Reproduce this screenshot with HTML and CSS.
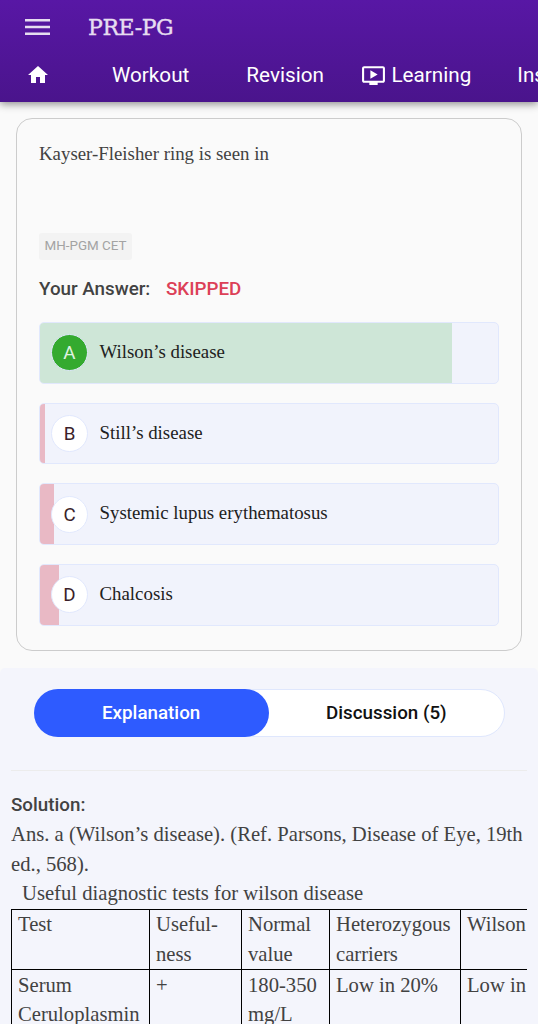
FILE: index.html
```html
<!DOCTYPE html>
<html lang="en">
<head>
  <meta charset="UTF-8">
  <meta name="viewport" content="width=device-width, initial-scale=1.0">
  <title>PRE-PG</title>
  <link rel="stylesheet" href="styles.css">
</head>
<body>
  <header class="header">
    <div class="top-bar">
      <button class="menu-btn" aria-label="Menu">
        <svg width="25" height="17" viewBox="0 0 25 17"><path fill="#e6ddf0" d="M0 0h25v2.4H0zM0 6.8h25v2.4H0zM0 13.600h25V16H0z"/></svg>
      </button>
      <h1 class="brand">PRE-PG</h1>
    </div>
    <nav class="nav">
      <a class="nav-home" href="#" aria-label="Home">
        <svg width="24" height="24" viewBox="0 0 24 24"><path fill="#fff" d="M10 20v-6h4v6h5v-8h3L12 3 2 12h3v8z"/></svg>
      </a>
      <a class="nav-workout" href="#">Workout</a>
      <a class="nav-revision" href="#">Revision</a>
      <a class="nav-learning" href="#">
        <svg width="25" height="25" viewBox="0 0 24 24"><path fill="#fff" d="M21 3H3c-1.1 0-2 .9-2 2v12c0 1.1.9 2 2 2h5v2h8v-2h5c1.1 0 2-.9 2-2V5c0-1.1-.9-2-2-2zm0 14H3V5h18v12zM9 7v8l7-4z"/></svg>
        <span>Learning</span>
      </a>
      <a href="#">Insights</a>
    </nav>
  </header>

  <main class="card">
    <p class="question">Kayser-Fleisher ring is seen in</p>
    <span class="tag">MH-PGM CET</span>
    <p class="answer">Your Answer: <span class="skipped">SKIPPED</span></p>
    <div class="options">
      <div class="option correct">
        <div class="bar" style="width: 90%"></div>
        <span class="letter">A</span>
        <span class="label">Wilson’s disease</span>
      </div>
      <div class="option">
        <div class="bar" style="width: 1%"></div>
        <span class="letter">B</span>
        <span class="label">Still’s disease</span>
      </div>
      <div class="option">
        <div class="bar" style="width: 3%"></div>
        <span class="letter">C</span>
        <span class="label">Systemic lupus erythematosus</span>
      </div>
      <div class="option">
        <div class="bar" style="width: 4.2%"></div>
        <span class="letter">D</span>
        <span class="label">Chalcosis</span>
      </div>
    </div>
  </main>

  <section class="details">
    <div class="tabs">
      <button class="tab active">Explanation</button>
      <button class="tab">Discussion (5)</button>
    </div>
    <div class="solution">
      <h2>Solution:</h2>
      <p>Ans. a (Wilson’s disease). (Ref. Parsons, Disease of Eye, 19th ed., 568).</p>
      <p class="caption">Useful diagnostic tests for wilson disease</p>
      <table>
        <colgroup>
          <col class="col-test">
          <col class="col-use">
          <col class="col-normal">
          <col class="col-carriers">
          <col class="col-wilson">
        </colgroup>
        <tr>
          <td>Test</td>
          <td>Useful-<br>ness</td>
          <td>Normal value</td>
          <td>Heterozygous carriers</td>
          <td>Wilson</td>
        </tr>
        <tr>
          <td>Serum Ceruloplasmin</td>
          <td>+</td>
          <td>180-350 mg/L</td>
          <td>Low in 20%</td>
          <td>Low in</td>
        </tr>
      </table>
    </div>
  </section>
</body>
</html>
```

FILE: styles.css
```css
* {
  box-sizing: border-box;
}

body {
  margin: 0;
  height: 1024px;
  overflow: hidden;
  background-color: #fafafa;
  font-family: Roboto, sans-serif;
  color: #424242;
}

p, h1, h2 {
  margin: 0;
}

button {
  border: none;
  background: none;
  padding: 0;
  font-family: inherit;
  cursor: pointer;
}

.header {
  height: 102px;
  overflow: hidden;
  background: linear-gradient(#5817a5, #4a148c);
  box-shadow: 0 2px 8px rgba(0, 0, 0, 0.45);
}

.top-bar {
  display: flex;
  align-items: center;
  height: 54px;
  padding-left: 25px;
}

.menu-btn {
  width: 25px;
  margin-right: 38px;
}

.menu-btn svg {
  display: block;
}

.brand {
  font-family: "DejaVu Serif", serif;
  font-size: 22px;
  font-weight: 400;
  letter-spacing: -0.4px;
  line-height: 26px;
  padding-top: 1px;
  color: #e6ddf0;
  -webkit-text-stroke: 0.4px #e6ddf0;
}

.nav {
  display: flex;
  align-items: center;
  height: 42px;
  padding-left: 26px;
}

.nav a {
  flex: none;
  color: #fff;
  font-size: 20.7px;
  text-decoration: none;
}

.nav svg {
  display: block;
}

.nav .nav-home {
  margin-right: 62px;
}

.nav .nav-workout {
  margin-right: 57px;
}

.nav .nav-revision {
  margin-right: 37.5px;
}

.nav .nav-learning {
  display: flex;
  align-items: center;
  gap: 5px;
  margin-right: 46px;
}

.nav-learning svg {
  margin-top: 1px;
}

.card {
  height: 533px;
  margin: 16px 16px 0;
  padding: 22px 22px 0;
  border: 1.5px solid #ccc;
  border-radius: 16px;
}

.question {
  height: 92px;
  font-family: "Liberation Serif", serif;
  font-size: 18.85px;
  line-height: 26px;
}

.tag {
  display: block;
  width: 93px;
  height: 27px;
  border-radius: 3px;
  background-color: #f3f3f3;
  color: #a3a3a3;
  font-size: 13.4px;
  line-height: 26px;
  text-align: center;
}

.answer {
  margin: 16px 0 20px;
  font-size: 18.8px;
  font-weight: 500;
  line-height: 26px;
}

.skipped {
  margin-left: 11px;
  color: #dc4057;
}

.options {
  display: grid;
  gap: 19px;
}

.option {
  position: relative;
  display: flex;
  align-items: center;
  height: 61.7px;
  padding-left: 11px;
  border: 1.5px solid #e1e8fd;
  border-radius: 5px;
  background-color: #f1f3fc;
  overflow: hidden;
}

/* share of users that picked the option */
.bar {
  position: absolute;
  top: 0;
  bottom: 0;
  left: 0;
  background-color: #e9b9c5;
}

.correct .bar {
  background-color: #cee6d7;
}

.letter {
  position: relative;
  width: 37px;
  height: 37px;
  margin-right: 11.5px;
  border: 1px solid #e1e8fd;
  border-radius: 50%;
  background-color: #fff;
  color: #3b1f2b;
  font-size: 18.8px;
  line-height: 36px;
  text-align: center;
}

.correct .letter {
  background-color: #34aa2f;
  color: #e0f2e0;
}

.label {
  position: relative;
  margin-top: -1.5px;
  color: #212121;
  font-family: "Liberation Serif", serif;
  font-size: 18.85px;
}

.details {
  height: 400px;
  margin-top: 17px;
  padding: 21px 11px 0;
  border-radius: 5px 5px 0 0;
  background-color: #f4f5fc;
}

.tabs {
  display: flex;
  height: 48px;
  margin: 0 22px 0 22.5px;
  border: 1px solid #dfe7fd;
  border-radius: 24px;
  background-color: #fff;
}

.tab {
  flex: 1;
  height: 48px;
  margin-top: -1px;
  padding-bottom: 1px;
  border-radius: 24px;
  color: #111;
  font-size: 18.8px;
  font-weight: 500;
}

.tab.active {
  margin-left: -1px;
  background-color: #2e5bff;
  color: #fff;
}

.solution {
  margin-top: 33px;
  padding-top: 20px;
  border-top: 1px solid #ececec;
  overflow: hidden;
  font-family: "Liberation Serif", serif;
  font-size: 20.65px;
  line-height: 29.6px;
}

.solution h2 {
  font-family: Roboto, sans-serif;
  font-size: 18.8px;
  font-weight: 500;
  line-height: 29px;
}

.caption {
  padding-left: 11px;
}

table {
  width: 600px;
  table-layout: fixed;
  border-collapse: collapse;
}

td {
  padding: 0.4px 5px 0 6px;
  border: 1px solid #000;
  line-height: 29.5px;
  vertical-align: top;
}

.col-test {
  width: 138px;
}

.col-use {
  width: 92px;
}

.col-normal {
  width: 88px;
}

.col-carriers {
  width: 131px;
}
```
